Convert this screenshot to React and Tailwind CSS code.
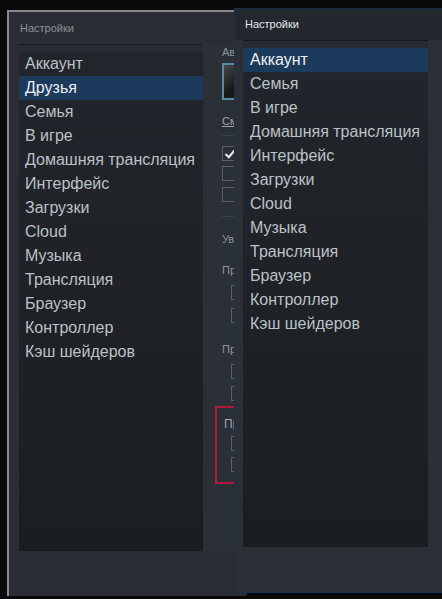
import React from "react";

const font = { fontFamily: '"Liberation Sans", Arial, sans-serif' };

const backItems = [
  "Аккаунт",
  "Друзья",
  "Семья",
  "В игре",
  "Домашняя трансляция",
  "Интерфейс",
  "Загрузки",
  "Cloud",
  "Музыка",
  "Трансляция",
  "Браузер",
  "Контроллер",
  "Кэш шейдеров",
];

const frontItems = backItems.filter((i) => i !== "Друзья");

function NavList({ items, active, width, height, pad }) {
  return (
    <div
      className={`flex flex-col bg-gradient-to-b from-[#22262c] to-[#1b1e21] ${width} ${height}`}
    >
      <div className="h-[8px] shrink-0 border-t border-[#16191d] bg-[#272b32]" />
      {items.map((item) => (
        <div
          key={item}
          className={`h-[24px] shrink-0 flex items-center ${pad} text-[16px] leading-none whitespace-nowrap ${
            item === active ? "bg-[#1c3a5b] text-[#eceff2]" : "text-[#bcc1c6]"
          }`}
        >
          {item}
        </div>
      ))}
    </div>
  );
}

function Box({ checked, className = "" }) {
  return (
    <div
      className={`shrink-0 w-[15px] h-[15px] border border-[#5d6167] flex items-center justify-center ${className}`}
    >
      {checked && (
        <svg width="12" height="12" viewBox="0 0 12 12">
          <path d="M1.5 6 L4.8 9.2 L10.5 2.5" stroke="#e6e9ec" strokeWidth="2.2" fill="none" />
        </svg>
      )}
    </div>
  );
}

function Label({ children, className = "" }) {
  return (
    <div className={`leading-[12px] whitespace-nowrap overflow-hidden ${className}`}>{children}</div>
  );
}

function FriendsPane() {
  return (
    <div className="w-[31px] h-[507px] bg-[#2b2f36] flex flex-col pl-[19px] text-[11px] text-[#8e949b] overflow-hidden">
      <Label className="mt-[2px]">Аватар</Label>
      <div className="shrink-0 mt-[5px] w-[40px] h-[37px] border-2 border-[#4f8ea4] bg-gradient-to-br from-[#4a4a4a] via-[#151515] to-[#3a3a3a]" />
      <Label className="mt-[15px] underline text-[#9da3a9]">Сменить</Label>
      <div className="shrink-0 mt-[8px] h-px w-[40px] bg-[#3d4148]" />
      <Box checked className="mt-[10px]" />
      <Box className="mt-[5px]" />
      <Box className="mt-[6px]" />
      <div className="shrink-0 mt-[14px] h-px w-[40px] bg-[#3d4148]" />
      <Label className="mt-[16px]">Уведомления</Label>
      <Label className="mt-[19px]">При получении</Label>
      <Box className="mt-[9px] ml-[9px]" />
      <Box className="mt-[8px] ml-[9px]" />
      <Label className="mt-[20px]">При получении</Label>
      <Box className="mt-[9px] ml-[9px]" />
      <Box className="mt-[7px] ml-[9px]" />
      <div className="shrink-0 mt-[5px] -ml-[7px] w-[60px] h-[78px] border-2 border-[#b1173f] flex flex-col pl-[7px]">
        <Label className="mt-[10px] w-[11px] text-[#a1a6ac] text-[12px]">При</Label>
        <Box className="mt-[6px] ml-[7px]" />
        <Box className="mt-[6px] ml-[7px]" />
      </div>
    </div>
  );
}

export default function App() {
  return (
    <div className="relative w-[442px] h-[599px] overflow-hidden bg-[#0a0a0a]" style={font}>
      {/* window behind */}
      <div className="absolute left-[7px] top-[10px] w-[240px] h-[586px] bg-[#2a2d33] border-l-2 border-t-2 border-[#85888c] flex flex-col">
        <div className="h-[32px] shrink-0 flex items-center pl-[11px] text-[11px] text-[#8a9199]">
          Настройки
        </div>
        <div className="flex pl-[10px]">
          <NavList
            items={backItems}
            active="Друзья"
            width="w-[184px]"
            height="h-[507px]"
            pad="pl-[6px]"
          />
          <FriendsPane />
        </div>
      </div>

      {/* window in front */}
      <div className="absolute left-[234px] top-[8px] w-[230px] h-[585px] bg-[#262a30] border border-[#1f2f4e] flex flex-col">
        <div className="h-[31px] shrink-0 flex items-center pl-[10px] text-[11px] text-[#e4e8eb] bg-[#23272e]">
          Настройки
        </div>
        <div className="flex pl-[8px] bg-[#2b2f36] flex-1">
          <NavList
            items={frontItems}
            active="Аккаунт"
            width="w-[185px]"
            height="h-[507px]"
            pad="pl-[7px]"
          />
        </div>
      </div>
    </div>
  );
}
